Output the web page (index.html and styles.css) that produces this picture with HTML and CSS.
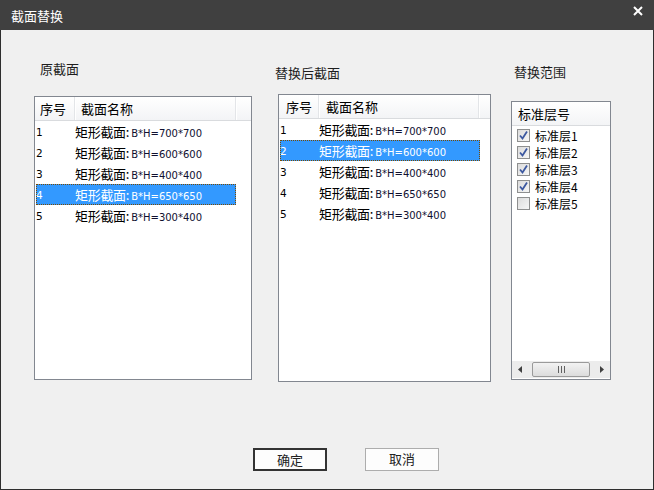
FILE: index.html
```html
<!DOCTYPE html>
<html>
<head>
<meta charset="utf-8">
<link rel="stylesheet" href="styles.css">
</head>
<body>
<div class="window">
  <div class="titlebar">
    <span class="title">截面替换</span>
    <svg class="close" width="10" height="10" viewBox="0 0 10 10"><path d="M1 1 L9 9 M9 1 L1 9" stroke="#fff" stroke-width="2" fill="none"/></svg>
  </div>
  <div class="content">
    <div class="panels">
      <div class="col col1">
        <div class="label">原截面</div>
        <div class="box">
          <div class="header">
            <div class="hcell c-no">序号</div>
            <div class="hcell c-name">截面名称</div>
            <div class="hcell c-rest"></div>
          </div>
          <div class="row"><span class="cell c-no">1</span><span class="cell c-name"><span class="zh">矩形截面:</span><span class="lat">B*H=700*700</span></span></div>
          <div class="row"><span class="cell c-no">2</span><span class="cell c-name"><span class="zh">矩形截面:</span><span class="lat">B*H=600*600</span></span></div>
          <div class="row"><span class="cell c-no">3</span><span class="cell c-name"><span class="zh">矩形截面:</span><span class="lat">B*H=400*400</span></span></div>
          <div class="row sel"><span class="cell c-no">4</span><span class="cell c-name"><span class="zh">矩形截面:</span><span class="lat">B*H=650*650</span></span></div>
          <div class="row"><span class="cell c-no">5</span><span class="cell c-name"><span class="zh">矩形截面:</span><span class="lat">B*H=300*400</span></span></div>
        </div>
      </div>
      <div class="col col2">
        <div class="label">替换后截面</div>
        <div class="box">
          <div class="header">
            <div class="hcell c-no">序号</div>
            <div class="hcell c-name">截面名称</div>
            <div class="hcell c-rest"></div>
          </div>
          <div class="row"><span class="cell c-no">1</span><span class="cell c-name"><span class="zh">矩形截面:</span><span class="lat">B*H=700*700</span></span></div>
          <div class="row sel"><span class="cell c-no">2</span><span class="cell c-name"><span class="zh">矩形截面:</span><span class="lat">B*H=600*600</span></span></div>
          <div class="row"><span class="cell c-no">3</span><span class="cell c-name"><span class="zh">矩形截面:</span><span class="lat">B*H=400*400</span></span></div>
          <div class="row"><span class="cell c-no">4</span><span class="cell c-name"><span class="zh">矩形截面:</span><span class="lat">B*H=650*650</span></span></div>
          <div class="row"><span class="cell c-no">5</span><span class="cell c-name"><span class="zh">矩形截面:</span><span class="lat">B*H=300*400</span></span></div>
        </div>
      </div>
      <div class="col col3">
        <div class="label">替换范围</div>
        <div class="box box3">
          <div class="header header3">
            <div class="hcell c-std">标准层号</div>
          </div>
          <div class="checks">
            <div class="crow"><span class="cb on"><svg width="11" height="11" viewBox="0 0 11 11"><path d="M2 5.5 L4.5 8.5 L9 1.5" stroke="#3c58a0" stroke-width="1.8" fill="none"/></svg></span><span class="ctext">标准层1</span></div>
            <div class="crow"><span class="cb on"><svg width="11" height="11" viewBox="0 0 11 11"><path d="M2 5.5 L4.5 8.5 L9 1.5" stroke="#3c58a0" stroke-width="1.8" fill="none"/></svg></span><span class="ctext">标准层2</span></div>
            <div class="crow"><span class="cb on"><svg width="11" height="11" viewBox="0 0 11 11"><path d="M2 5.5 L4.5 8.5 L9 1.5" stroke="#3c58a0" stroke-width="1.8" fill="none"/></svg></span><span class="ctext">标准层3</span></div>
            <div class="crow"><span class="cb on"><svg width="11" height="11" viewBox="0 0 11 11"><path d="M2 5.5 L4.5 8.5 L9 1.5" stroke="#3c58a0" stroke-width="1.8" fill="none"/></svg></span><span class="ctext">标准层4</span></div>
            <div class="crow"><span class="cb"></span><span class="ctext">标准层5</span></div>
          </div>
          <div class="hscroll">
            <svg class="arrow" width="17" height="17" viewBox="0 0 17 17"><path d="M10 5 L6 8.5 L10 12 Z" fill="#404040"/></svg>
            <div class="track"><div class="thumb"><svg width="9" height="7" viewBox="0 0 9 7"><path d="M1.5 0 V7 M4.5 0 V7 M7.5 0 V7" stroke="#606060" stroke-width="1"/></svg></div></div>
            <svg class="arrow" width="17" height="17" viewBox="0 0 17 17"><path d="M7 5 L11 8.5 L7 12 Z" fill="#404040"/></svg>
          </div>
        </div>
      </div>
    </div>
    <div class="buttons">
      <div class="btn default">确定</div>
      <div class="btn">取消</div>
    </div>
  </div>
</div>
</body>
</html>
```

FILE: styles.css
```css
* { box-sizing: border-box; }
html, body { margin: 0; padding: 0; }
body {
  font-family: "Noto Sans CJK SC", "Liberation Sans", sans-serif;
  font-size: 13px;
  color: #000;
  background: #f0f0f0;
}
.window {
  width: 654px;
  height: 490px;
  border: 1px solid #2e2e2e;
  border-top: none;
  background: #f0f0f0;
  display: flex;
  flex-direction: column;
}
.titlebar {
  height: 30px;
  background: #404040;
  display: flex;
  align-items: center;
  justify-content: space-between;
  padding: 0 10px 0 11px;
  margin: 0 -1px;
}
.title {
  color: #fff;
  font-size: 13px;
  line-height: 16px;
  margin-top: 2px;
}
.close { margin-top: -9px; margin-right: 1px; }
.content {
  flex: 1;
  display: flex;
  flex-direction: column;
}
.panels {
  display: flex;
  padding-left: 33px;
  height: 353px;
}
.col { display: flex; flex-direction: column; }
.label {
  font-size: 13px;
  line-height: 16px;
  color: #1e1e1e;
}
.col1 { width: 218px; }
.col1 .label { margin: 31px 0 19px 6px; }
.col1 .box { height: 284px; }
.col2 { width: 213px; margin-left: 26px; }
.col2 .label { margin: 35px 0 13px -3px; }
.col2 .box { height: 288px; }
.col3 { width: 100px; margin-left: 20px; }
.col3 .label { margin: 34px 0 21px 3px; }
.col3 .box { height: 279px; }

.box {
  border: 1px solid #828790;
  background: #fff;
  display: flex;
  flex-direction: column;
}
.header {
  height: 24px;
  display: flex;
  background: linear-gradient(#ffffff, #f3f4f6);
  border-bottom: 1px solid #d9dbde;
  flex: none;
}
.hcell {
  line-height: 23px;
  font-size: 13px;
  border-right: 1px solid #e3e5e8;
  box-shadow: 1px 0 0 #fff;
  white-space: nowrap;
}
.hcell.c-no { width: 40px; padding-left: 5px; }
.hcell.c-name { width: 161px; padding-left: 6px; }
.hcell.c-rest { flex: 1; border-right: none; box-shadow: none; }
.col2 .hcell.c-no { padding-left: 7px; }
.col2 .hcell.c-name { width: 160px; padding-left: 7px; }

.row {
  height: 21px;
  display: flex;
  align-items: center;
  margin-left: 1px;
  width: 200px;
  white-space: nowrap;
}
.row .c-no { width: 39px; font-family: "DejaVu Sans", sans-serif; font-size: 10.5px; }
.row .c-name { flex: 1; }
.zh { font-size: 13px; letter-spacing: -0.3px; margin-right: 2px; }
.lat { font-family: "DejaVu Sans", sans-serif; font-size: 10px; color: #101030; }
.row.sel {
  background: #3399ff;
  color: #fff;
  outline: 1px dotted #7a4a00;
  outline-offset: -1px;
}
.row.sel .lat { color: #fff; }

.header3 .c-std { width: 100%; padding-left: 6px; border-right: none; box-shadow: none; }
.checks { flex: 1; padding-top: 1px; }
.crow {
  height: 17px;
  display: flex;
  align-items: center;
  padding-left: 5px;
  white-space: nowrap;
}
.cb {
  width: 13px;
  height: 13px;
  border: 1px solid #8e8f8f;
  background: linear-gradient(135deg, #dcdcdc, #f6f6f6);
  display: flex;
  align-items: center;
  justify-content: center;
  margin-right: 5px;
}
.ctext { font-size: 12px; line-height: 16px; }

.hscroll {
  height: 17px;
  flex: none;
  display: flex;
  background: #ececec;
  margin-bottom: 1px;
}
.arrow { flex: none; }
.track { flex: 1; padding: 1px 0; }
.thumb {
  width: 58px;
  height: 15px;
  margin-left: 3px;
  border: 1px solid #9a9a9a;
  border-radius: 2px;
  background: linear-gradient(#f2f2f2, #dcdcdc);
  display: flex;
  align-items: center;
  justify-content: center;
}

.buttons {
  display: flex;
  padding-left: 252px;
  margin-top: 65px;
  gap: 38px;
}
.btn {
  width: 74px;
  height: 23px;
  border: 1px solid #adadad;
  background: #fdfdfd;
  text-align: center;
  line-height: 20px;
  font-size: 13px;
  color: #222;
}
.btn.default { border: 2px solid #333; line-height: 19px; }
```
